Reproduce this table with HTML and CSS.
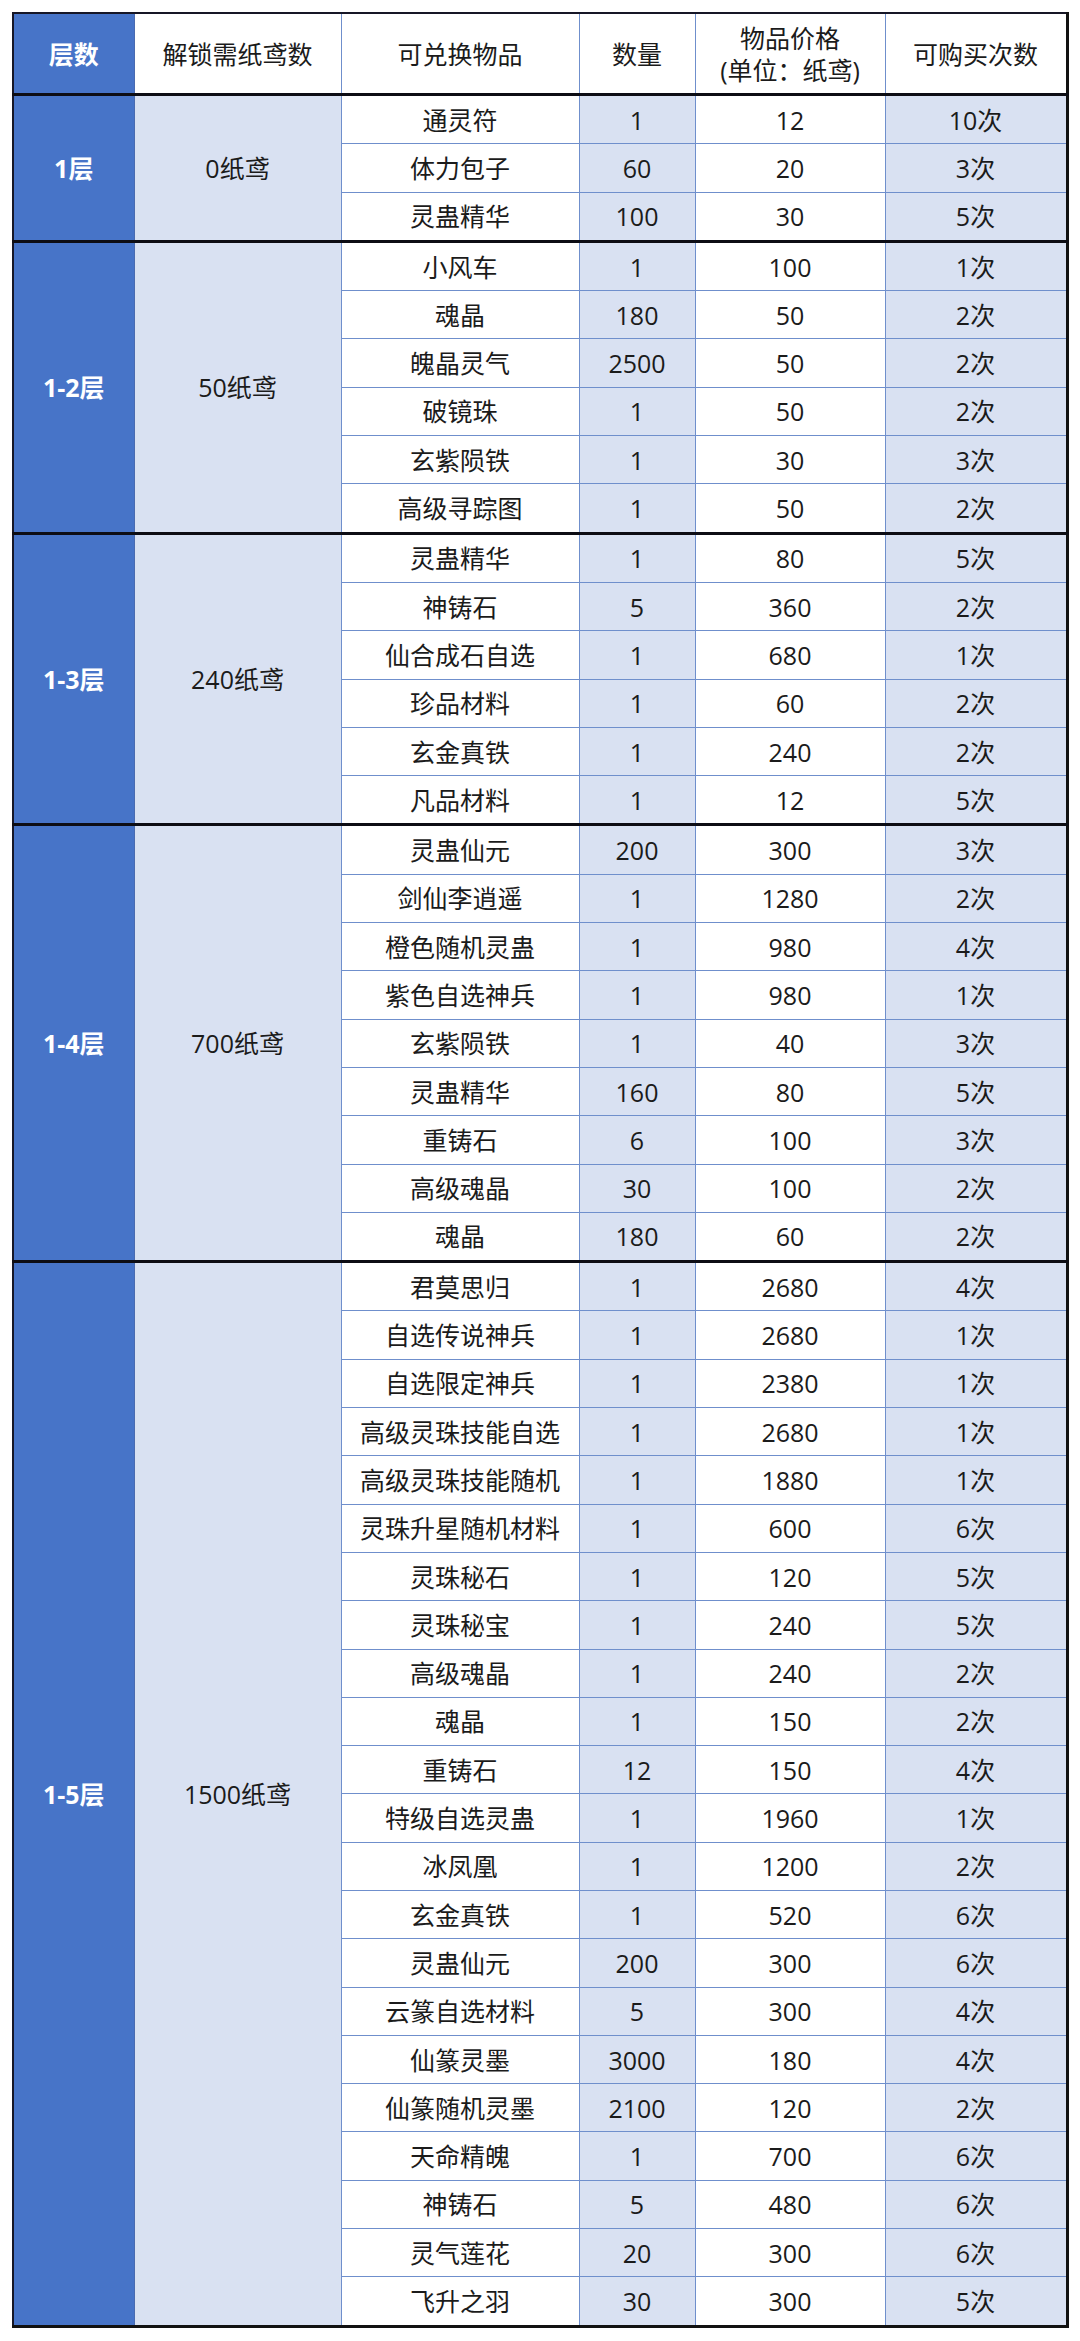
FILE: index.html
```html
<!DOCTYPE html>
<html lang="zh">
<head>
<meta charset="utf-8">
<title>纸鸢兑换</title>
<link rel="stylesheet" href="styles.css">
</head>
<body>
<table class="shop">
  <colgroup>
    <col class="c-layer"><col class="c-unlock"><col class="c-item"><col class="c-qty"><col class="c-price"><col class="c-times">
  </colgroup>
  <thead>
    <tr>
      <th class="layer">层数</th>
      <th>解锁需纸鸢数</th>
      <th>可兑换物品</th>
      <th>数量</th>
      <th>物品价格<br>(单位：纸鸢)</th>
      <th>可购买次数</th>
    </tr>
  </thead>
  <tbody>
    <tr class="gs"><td class="layer" rowspan="3">1层</td><td class="unlock" rowspan="3">0纸鸢</td><td>通灵符</td><td class="shade">1</td><td>12</td><td class="shade">10次</td></tr>
    <tr><td>体力包子</td><td class="shade">60</td><td>20</td><td class="shade">3次</td></tr>
    <tr><td>灵蛊精华</td><td class="shade">100</td><td>30</td><td class="shade">5次</td></tr>

    <tr class="gs"><td class="layer" rowspan="6">1-2层</td><td class="unlock" rowspan="6">50纸鸢</td><td>小风车</td><td class="shade">1</td><td>100</td><td class="shade">1次</td></tr>
    <tr><td>魂晶</td><td class="shade">180</td><td>50</td><td class="shade">2次</td></tr>
    <tr><td>魄晶灵气</td><td class="shade">2500</td><td>50</td><td class="shade">2次</td></tr>
    <tr><td>破镜珠</td><td class="shade">1</td><td>50</td><td class="shade">2次</td></tr>
    <tr><td>玄紫陨铁</td><td class="shade">1</td><td>30</td><td class="shade">3次</td></tr>
    <tr><td>高级寻踪图</td><td class="shade">1</td><td>50</td><td class="shade">2次</td></tr>

    <tr class="gs"><td class="layer" rowspan="6">1-3层</td><td class="unlock" rowspan="6">240纸鸢</td><td>灵蛊精华</td><td class="shade">1</td><td>80</td><td class="shade">5次</td></tr>
    <tr><td>神铸石</td><td class="shade">5</td><td>360</td><td class="shade">2次</td></tr>
    <tr><td>仙合成石自选</td><td class="shade">1</td><td>680</td><td class="shade">1次</td></tr>
    <tr><td>珍品材料</td><td class="shade">1</td><td>60</td><td class="shade">2次</td></tr>
    <tr><td>玄金真铁</td><td class="shade">1</td><td>240</td><td class="shade">2次</td></tr>
    <tr><td>凡品材料</td><td class="shade">1</td><td>12</td><td class="shade">5次</td></tr>

    <tr class="gs"><td class="layer" rowspan="9">1-4层</td><td class="unlock" rowspan="9">700纸鸢</td><td>灵蛊仙元</td><td class="shade">200</td><td>300</td><td class="shade">3次</td></tr>
    <tr><td>剑仙李逍遥</td><td class="shade">1</td><td>1280</td><td class="shade">2次</td></tr>
    <tr><td>橙色随机灵蛊</td><td class="shade">1</td><td>980</td><td class="shade">4次</td></tr>
    <tr><td>紫色自选神兵</td><td class="shade">1</td><td>980</td><td class="shade">1次</td></tr>
    <tr><td>玄紫陨铁</td><td class="shade">1</td><td>40</td><td class="shade">3次</td></tr>
    <tr><td>灵蛊精华</td><td class="shade">160</td><td>80</td><td class="shade">5次</td></tr>
    <tr><td>重铸石</td><td class="shade">6</td><td>100</td><td class="shade">3次</td></tr>
    <tr><td>高级魂晶</td><td class="shade">30</td><td>100</td><td class="shade">2次</td></tr>
    <tr><td>魂晶</td><td class="shade">180</td><td>60</td><td class="shade">2次</td></tr>

    <tr class="gs"><td class="layer" rowspan="22">1-5层</td><td class="unlock" rowspan="22">1500纸鸢</td><td>君莫思归</td><td class="shade">1</td><td>2680</td><td class="shade">4次</td></tr>
    <tr><td>自选传说神兵</td><td class="shade">1</td><td>2680</td><td class="shade">1次</td></tr>
    <tr><td>自选限定神兵</td><td class="shade">1</td><td>2380</td><td class="shade">1次</td></tr>
    <tr><td>高级灵珠技能自选</td><td class="shade">1</td><td>2680</td><td class="shade">1次</td></tr>
    <tr><td>高级灵珠技能随机</td><td class="shade">1</td><td>1880</td><td class="shade">1次</td></tr>
    <tr><td>灵珠升星随机材料</td><td class="shade">1</td><td>600</td><td class="shade">6次</td></tr>
    <tr><td>灵珠秘石</td><td class="shade">1</td><td>120</td><td class="shade">5次</td></tr>
    <tr><td>灵珠秘宝</td><td class="shade">1</td><td>240</td><td class="shade">5次</td></tr>
    <tr><td>高级魂晶</td><td class="shade">1</td><td>240</td><td class="shade">2次</td></tr>
    <tr><td>魂晶</td><td class="shade">1</td><td>150</td><td class="shade">2次</td></tr>
    <tr><td>重铸石</td><td class="shade">12</td><td>150</td><td class="shade">4次</td></tr>
    <tr><td>特级自选灵蛊</td><td class="shade">1</td><td>1960</td><td class="shade">1次</td></tr>
    <tr><td>冰凤凰</td><td class="shade">1</td><td>1200</td><td class="shade">2次</td></tr>
    <tr><td>玄金真铁</td><td class="shade">1</td><td>520</td><td class="shade">6次</td></tr>
    <tr><td>灵蛊仙元</td><td class="shade">200</td><td>300</td><td class="shade">6次</td></tr>
    <tr><td>云篆自选材料</td><td class="shade">5</td><td>300</td><td class="shade">4次</td></tr>
    <tr><td>仙篆灵墨</td><td class="shade">3000</td><td>180</td><td class="shade">4次</td></tr>
    <tr><td>仙篆随机灵墨</td><td class="shade">2100</td><td>120</td><td class="shade">2次</td></tr>
    <tr><td>天命精魄</td><td class="shade">1</td><td>700</td><td class="shade">6次</td></tr>
    <tr><td>神铸石</td><td class="shade">5</td><td>480</td><td class="shade">6次</td></tr>
    <tr><td>灵气莲花</td><td class="shade">20</td><td>300</td><td class="shade">6次</td></tr>
    <tr><td>飞升之羽</td><td class="shade">30</td><td>300</td><td class="shade">5次</td></tr>
  </tbody>
</table>
</body>
</html>
```
FILE: styles.css
```css
html, body {
  margin: 0;
  padding: 0;
  background: #ffffff;
}

body {
  padding: 12px 0 0 12px;
  font-family: "Open Sans", "Noto Sans CJK SC", "Noto Sans", sans-serif;
  color: #1b1b1b;
}

.shop {
  border-collapse: collapse;
  table-layout: fixed;
  width: 1055px;
  border-top: 2px solid #161626;
  border-left: 2px solid #161626;
  border-right: 3px solid #111111;
  border-bottom: 3px solid #111111;
  font-size: 25px;
}

.c-layer { width: 121px; }
.c-unlock { width: 207px; }
.c-item { width: 238px; }
.c-qty { width: 116px; }
.c-price { width: 190px; }
.c-times { width: 182px; }

.shop th,
.shop td {
  padding: 0;
  text-align: center;
  vertical-align: middle;
  border: 1px solid #6f8fcc;
  font-weight: 400;
  line-height: 32px;
  white-space: nowrap;
}

.shop thead th {
  height: 79px;
  background: #ffffff;
  border-bottom: 3px solid #0d0d14;
  border-top: none;
}

.shop td {
  height: 47.3px;
  background: #ffffff;
}

.shop .layer {
  background: #4774c8;
  color: #ffffff;
  font-weight: 700;
  border-left: none;
  border-right: 1px solid #4a6bb0;
}

.shop .unlock {
  background: #d9e1f2;
}

.shop .shade {
  background: #d9e1f2;
}

.shop tr.gs td {
  border-top: 3px solid #0d0d14;
}

.shop tbody tr:first-child td {
  border-top: 3px solid #0d0d14;
}
```
